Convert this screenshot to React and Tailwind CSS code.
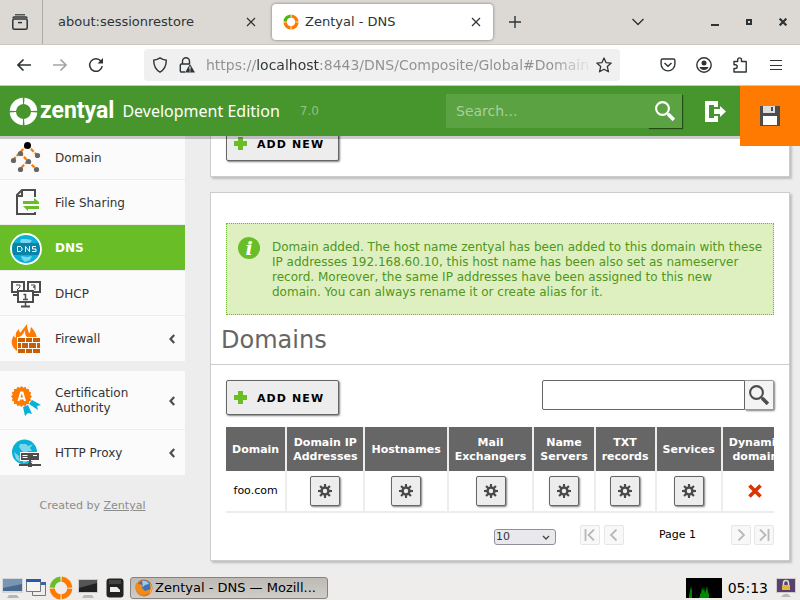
import React from "react";

function Cross({ className = "" }) {
  return (
    <svg viewBox="0 0 10 10" className={"size-2.5 " + className} fill="none" stroke="currentColor" strokeWidth="1.2">
      <path d="M1 1l8 8M9 1l-8 8" />
    </svg>
  );
}

function RingLogo({ className, arcs }) {
  return (
    <svg viewBox="0 0 30 30" className={className} fill="none" strokeWidth="6.5">
      <path d="M14.4 4a11 11 0 0 0-10.4 10.4" stroke={arcs[0]} />
      <path d="M15.8 4a11 11 0 0 1 10.2 10.4" stroke={arcs[1]} />
      <path d="M26 15.8a11 11 0 0 1-10.2 10.2" stroke={arcs[1]} />
      <path d="M14.4 26a11 11 0 0 1-10.4-10.2" stroke={arcs[1]} />
    </svg>
  );
}

function Magnifier({ className }) {
  return (
    <svg viewBox="0 0 20 20" className={className} fill="none" stroke="currentColor">
      <circle cx="7.5" cy="7.5" r="6.4" strokeWidth="2.1" />
      <path d="M12 12l2 2" strokeWidth="2" />
      <path d="M13.3 13.3l5.6 5.6" strokeWidth="3.6" />
    </svg>
  );
}

function Gear() {
  const teeth = [0, 45, 90, 135, 180, 225, 270, 315];
  return (
    <svg viewBox="0 0 14 14" className="size-3.5 text-[#4a4a4a]">
      <circle cx="7" cy="7" r="3.4" fill="none" stroke="currentColor" strokeWidth="2.4" />
      {teeth.map((a) => (
        <path key={a} d="M5.8 3.4L6 0h2l.2 3.4z" fill="currentColor" transform={`rotate(${a} 7 7)`} />
      ))}
    </svg>
  );
}

function TabBar() {
  return (
    <div className="flex h-[45px] shrink-0 items-center border-b border-[#cbc6be] bg-[#dcd9d4] text-[13px] text-[#2e3436]">
      <button aria-label="Recent browsing" className="flex h-full w-[43px] items-center justify-center border-r border-[#aeaaa5] pr-0.5">
        <svg viewBox="0 0 16 16" className="size-4" fill="none" stroke="currentColor" strokeWidth="1.5">
          <path d="M3 .8h10" strokeWidth="1.2" />
          <path d="M1 4.2c0-.8.5-1.2 1.3-1.2h11.4c.8 0 1.3.4 1.3 1.2" />
          <rect x=".8" y="5" width="14.4" height="10.2" rx="1.5" />
          <path d="M6 8.6h4" />
        </svg>
      </button>
      <div className="flex w-[227px] items-center pr-3.5 pl-[15px]">
        <span className="flex-1">about:sessionrestore</span>
        <button aria-label="Close tab"><Cross /></button>
      </div>
      <div className="ml-0.5 flex h-9 w-[221px] items-center rounded bg-white pr-3 pl-[11px] shadow-[0_0_3px_rgba(0,0,0,0.5)]">
        <RingLogo className="size-4" arcs={["#4eb516", "#ff7a00"]} />
        <span className="flex-1 pl-1.5">Zentyal - DNS</span>
        <button aria-label="Close tab"><Cross /></button>
      </div>
      <button aria-label="New tab" className="ml-4">
        <svg viewBox="0 0 12 12" className="size-3" stroke="currentColor" strokeWidth="1.4"><path d="M6 0v12M0 6h12" /></svg>
      </button>
      <div className="ml-auto flex items-center pr-3">
        <button aria-label="List all tabs" className="mr-[67px]">
          <svg viewBox="0 0 12 8" className="h-2 w-3" fill="none" stroke="currentColor" strokeWidth="1.4"><path d="M.5 1L6 6.500L11.500 1" /></svg>
        </button>
        <button aria-label="Minimize" className="mr-[27px]">
          <svg viewBox="0 0 8 8" className="size-2" fill="currentColor"><path d="M0 6h8v2H0z" /></svg>
        </button>
        <button aria-label="Maximize" className="mr-[27px]">
          <svg viewBox="0 0 6 6" className="size-1.5" fill="none" stroke="currentColor" strokeWidth="2"><path d="M1 1h4v4H1z" /></svg>
        </button>
        <button aria-label="Close window" className="mr-px">
          <svg viewBox="0 0 8 8" className="size-2" stroke="currentColor" strokeWidth="2.2"><path d="M.6.6l6.800 6.800M7.400.6L.6 7.400" /></svg>
        </button>
      </div>
    </div>
  );
}

function NavBar() {
  return (
    <div className="flex h-[41px] shrink-0 items-center border-b border-[#cbc6be] bg-white text-[#2e3436]">
      <button aria-label="Back" className="ml-[17px]">
        <svg viewBox="0 0 14 12" className="h-3 w-3.5" fill="none" stroke="currentColor" strokeWidth="1.600"><path d="M6.500.5L1 6l5.500 5.500M1 6h13" /></svg>
      </button>
      <button aria-label="Forward" className="ml-[22px] text-[#a5a5a5]">
        <svg viewBox="0 0 14 12" className="h-3 w-3.5" fill="none" stroke="currentColor" strokeWidth="1.600"><path d="M7.500.5L13 6l-5.500 5.500M13 6H0" /></svg>
      </button>
      <button aria-label="Reload" className="ml-[21px]">
        <svg viewBox="0 0 16 16" className="size-4" fill="none" stroke="currentColor" strokeWidth="1.500">
          <path d="M13 4.200A6.300 6.300 0 1 0 14.200 9" />
          <path d="M15 1v5.500H9.500z" fill="currentColor" stroke="none" />
        </svg>
      </button>
      <div className="ml-10 flex h-8 min-w-0 flex-1 items-center rounded bg-[#f0f0f0] px-2">
        <svg viewBox="0 0 16 16" className="size-4 shrink-0" fill="none" stroke="currentColor" strokeWidth="1.400">
          <path d="M8 .9c2 1.500 4 2 6.300 2.200 0 5.400-1.300 9.500-6.300 12-5-2.500-6.300-6.600-6.300-12C4 2.900 6 2.400 8 .9z" />
        </svg>
        <svg viewBox="0 0 16 16" className="ml-[11px] size-4 shrink-0" fill="none" stroke="currentColor" strokeWidth="1.400">
          <path d="M3.500 7V4.200a3.500 3.500 0 0 1 7 0V7M6 15H2.500c-.8 0-1.200-.4-1.200-1.200V8.200c0-.8.4-1.200 1.200-1.200h8.200" />
          <path d="M11 7l5 8.500H6z" fill="currentColor" stroke="none" />
          <path d="M11 9.500v3M11 13.400v1" stroke="#f0f0f0" strokeWidth="1.200" />
        </svg>
        <input
          aria-label="Address"
          readOnly
          defaultValue="https://localhost:8443/DNS/Composite/Global#Domains"
          className="ml-[11px] min-w-0 flex-1 bg-[linear-gradient(90deg,#8d8f90_50px,#2e3436_50px,#2e3436_113px,#8d8f90_113px,#8d8f90_345px,transparent_388px)] bg-clip-text text-sm text-transparent outline-none"
        />
        <button aria-label="Bookmark this page" className="ml-2">
          <svg viewBox="0 0 16 16" className="size-4" fill="none" stroke="currentColor" strokeWidth="1.300" strokeLinejoin="round">
            <path d="M8 1l2 4.600 5.200.5-3.900 3.500 1.200 5.200L8 12.200l-4.500 2.600 1.200-5.200L.8 6.100 6 5.600z" />
          </svg>
        </button>
      </div>
      <div className="ml-10 flex items-center gap-5 pr-4">
        <button aria-label="Save to Pocket">
          <svg viewBox="0 0 16 16" className="size-4" fill="none" stroke="currentColor" strokeWidth="1.400">
            <path d="M2.500 2h11c.9 0 1.400.5 1.400 1.400V7A6.900 6.900 0 0 1 1.100 7V3.400C1.100 2.500 1.600 2 2.500 2zM4.500 6L8 9.200 11.500 6" />
          </svg>
        </button>
        <button aria-label="Account">
          <svg viewBox="0 0 16 16" className="size-4">
            <circle cx="8" cy="8" r="7.200" fill="none" stroke="currentColor" strokeWidth="1.400" />
            <circle cx="8" cy="5.900" r="2.500" fill="currentColor" />
            <path d="M3.500 10h9c-.6 1.800-2.300 3-4.500 3s-3.900-1.200-4.500-3z" fill="currentColor" />
          </svg>
        </button>
        <button aria-label="Extensions">
          <svg viewBox="0 0 16 16" className="size-4" fill="none" stroke="currentColor" strokeWidth="1.400" strokeLinejoin="round">
            <path d="M2 15V11.500h1.300a1.900 1.900 0 0 0 0-3.800H2V4.500h3.700V2.800a1.900 1.900 0 0 1 3.800 0v1.700h4.700V15z" />
          </svg>
        </button>
        <button aria-label="Open application menu">
          <svg viewBox="0 0 16 12" className="h-3 w-4" stroke="currentColor"><path d="M2 1.500h12M2 6.500h12M2 10.500h12" /></svg>
        </button>
      </div>
    </div>
  );
}

function Header() {
  return (
    <header className="relative z-10 flex h-[50px] shrink-0 items-center bg-[#47962d] shadow-[0_3px_0_rgba(0,0,0,0.2)]">
      <RingLogo className="ml-[9px] size-[29px] shrink-0" arcs={["#fff", "#fff"]} />
      <span className="ml-0.5 font-[Roboto] text-[23px] font-bold text-white">zentyal</span>
      <span className="ml-2 font-['Noto_Sans'] text-base whitespace-nowrap text-white">Development Edition</span>
      <span className="ml-5 text-xs text-[#91c081]">7.0</span>
      <form className="ml-auto flex h-[34px] w-[236px] bg-[#5aa242]" onSubmit={(e) => e.preventDefault()}>
        <input aria-label="Search" placeholder="Search..." className="min-w-0 flex-1 px-2.5 font-['DejaVu_Sans'] text-sm text-white outline-none placeholder:text-[#a9d09b]" />
        <button aria-label="Search" className="flex w-[34px] items-center justify-center text-white shadow-[1px_1px_1px_rgba(0,0,0,0.5)]">
          <Magnifier className="size-5" />
        </button>
      </form>
      <button aria-label="Log out" className="ml-[23px]">
        <svg viewBox="0 0 21 21" className="size-[21px]" fill="#fff">
          <path d="M0 0h13v6H9V4H4v13h5v-2h4v6H0z" />
          <path d="M9 8h6V5l6 5.500-6 5.500v-3H9z" />
        </svg>
      </button>
      <button aria-label="Save changes" className="ml-3.5 flex h-[60px] w-[60px] items-center justify-center self-start bg-[#ff7a00]">
        <svg viewBox="0 0 20 20" className="size-5">
          <path d="M0 0h20v20H0z" fill="#4d4d4d" />
          <path d="M3 0h12v7H3z" fill="#dcdcdc" />
          <path d="M11 1h2v4h-2z" fill="#4d4d4d" />
          <path d="M3 10h14v9H3z" fill="#fff" />
        </svg>
      </button>
    </header>
  );
}

function DomainIcon() {
  return (
    <svg viewBox="0 0 32 32" className="size-8">
      <path d="M17 3L3 18M17 3l10 10M10 11l16 16M18 19l-8 8" stroke="#ff7a00" strokeWidth="2.200" strokeDasharray="4 1.500" />
      <circle cx="17.500" cy="3.500" r="3.500" />
      <g fill="#666"><circle cx="10.500" cy="11.500" r="2.600" /><circle cx="3.500" cy="18.500" r="2.600" /><circle cx="27.500" cy="13.500" r="2.600" /><circle cx="18.500" cy="19.500" r="2.600" /><circle cx="10.500" cy="27.500" r="2.600" /><circle cx="26.500" cy="27.500" r="2.600" /></g>
    </svg>
  );
}

function FileSharingIcon() {
  return (
    <svg viewBox="0 0 32 32" className="size-8" fill="none">
      <path d="M25 10V3H12L7 8v19h18v-2M7 9h5V3" stroke="#4d4d4d" strokeWidth="2" />
      <path d="M13 14h11v-3l5 4v2H13zM29 19H13l5 5v-2h11z" fill="#69be28" />
    </svg>
  );
}

function DnsIcon() {
  return (
    <svg viewBox="0 0 32 32" className="size-8">
      <circle cx="16" cy="16" r="15" fill="#0ab0d8" />
      <path d="M11 6h5l6 1-2 3-6 1-4-2zM11 23l6 1 5-1-2 4-5 2-3-3z" fill="#7cd6ee" />
      <path d="M2 10h28v12H2z" fill="#0784a8" />
      <circle cx="16" cy="16" r="15" fill="none" stroke="#fff" strokeWidth="1.800" />
      <path d="M7.500 13.500h3l1.500 1.500v2l-1.500 1.500h-3zM15.500 19v-5.500l4 5V13M26 13.500h-3.500v2.500H26v2.500h-4" fill="none" stroke="#fff" />
    </svg>
  );
}

function DhcpIcon() {
  return (
    <svg viewBox="0 0 32 32" className="size-8" fill="none" stroke="#4d4d4d">
      <path d="M2 4h12v10H2zM18 4h12v10H18z" strokeWidth="2" />
      <path d="M6 7h4v2l-3 3M21 7h4v2h-2 2v3" strokeWidth="1" />
      <path d="M3 17h5M24 17h5" strokeWidth="2" />
      <path d="M8 13h15v11H8z" fill="#fff" strokeWidth="2" />
      <path d="M13.500 16.500h2v5M13 21.500h5M15.500 25v3" strokeWidth="1.500" />
      <path d="M11 28.500h9" strokeWidth="2" />
    </svg>
  );
}

function FirewallIcon() {
  return (
    <svg viewBox="0 0 32 32" className="size-8">
      <path d="M7 28c-7-5-6-11-3-16 0 2 1 3 2 2-1-4 1-6 3-8 0 3 1 4 2 3 1-2 3-4 6-8 0 4 1 6 2 9 2 0 1-4 2-6 3 3 5 6 6 11z" fill="#ff7a00" />
      <path d="M9 14c3-1 5-4 6-7 0 3 0 5 2 7z" fill="#fbfbfb" />
      <path d="M7 14h24v17H7z" fill="#fbfbfb" />
      <path d="M8 15h7v4H8zM16 15h6v4h-6zM23 15h7v4h-7zM8 20h3v5H8zM12 20h6v5h-6zM19 20h7v5h-7zM27 20h3v5h-3zM8 26h7v4H8zM16 26h6v4h-6zM23 26h7v4h-7z" fill="#c95f00" />
    </svg>
  );
}

function CertificationIcon() {
  const points = Array.from({ length: 32 }, (_, i) => {
    const r = i % 2 ? 9 : 10.500;
    const a = (i * Math.PI) / 16;
    return `${11.500 + r * Math.cos(a)},${11.500 + r * Math.sin(a)}`;
  }).join(" ");
  return (
    <svg viewBox="0 0 32 32" className="size-8">
      <path d="M13 22l5-2 4 9-4-1-3 3zM19 19l3-4 9 5-4 1 1 4z" fill="#09b1d6" />
      <polygon points={points} fill="#ff7a00" />
      <path d="M8.500 16l2.500-8.500h1.500L15 16M9.500 13.500h4.500" fill="none" stroke="#fff" strokeWidth="2" />
    </svg>
  );
}

function ProxyIcon() {
  return (
    <svg viewBox="0 0 32 32" className="size-8">
      <circle cx="14.500" cy="15" r="12.500" fill="#09b1d6" />
      <path d="M10 7h6l2 2 5-2-3 4 2 3h-4l-1 3-5-3-3-4zM4 15l5 4 1 6-4-3zM13 19h4v6l-4 1z" fill="#7cd6ee" />
      <path d="M10 15h20v9H10z" fill="#fbfbfb" />
      <path d="M11 16h18v7H11zM19 23h2v4h-2zM9 27h22v2H9zM18 26h4v4h-4z" fill="#4d4d4d" />
      <path d="M12.500 18.500h5M12.500 20.500h5M23 18.500h4" stroke="#fff" />
    </svg>
  );
}

function MenuItem({ icon, label, active, arrow, last, tall }) {
  return (
    <a
      href="#"
      className={
        "flex items-center border-b px-2.5 pt-0.5 text-xs/[15px] " +
        (tall ? "h-[59px] " : active ? "h-[46px] " : "h-[45px] ") +
        (active ? "border-[#ededed] bg-[#69be28] font-bold text-white" : "bg-[#fbfbfb] text-[#333] " + (last ? "border-[#fbfbfb]" : "border-[#ededed]"))
      }
    >
      {icon}
      <span className="flex-1 pl-[13px]">{label}</span>
      {arrow && (
        <svg viewBox="0 0 6 10" className="h-2.5 w-1.5" fill="none" stroke="#4d4d4d" strokeWidth="2.200"><path d="M5.200 1L1.500 5l3.700 4" /></svg>
      )}
    </a>
  );
}

function Sidebar() {
  return (
    <aside className="w-[185px] shrink-0 pt-2.5">
      <nav>
        <MenuItem icon={<DomainIcon />} label="Domain" />
        <MenuItem icon={<FileSharingIcon />} label="File Sharing" />
        <MenuItem icon={<DnsIcon />} label="DNS" active />
        <MenuItem icon={<DhcpIcon />} label="DHCP" />
        <MenuItem icon={<FirewallIcon />} label="Firewall" arrow last />
        <div className="h-2.5" />
        <MenuItem icon={<CertificationIcon />} label={<>Certification<br />Authority</>} arrow tall />
        <MenuItem icon={<ProxyIcon />} label="HTTP Proxy" arrow last />
      </nav>
      <p className="pt-[23px] text-center text-[11px]/4 text-[#8c8c8c]">
        Created by <a href="#" className="underline">Zentyal</a>
      </p>
    </aside>
  );
}

function AddNew() {
  return (
    <button className="flex h-[35px] items-center gap-2.5 rounded-xs border border-[#666] bg-[#ededed] pr-3.5 pl-[7px] text-[11px] font-bold tracking-widest text-black shadow-[1px_1px_2px_rgba(0,0,0,0.5)]">
      <svg viewBox="0 0 13 13" className="size-[13px]" fill="#69be28"><path d="M4 0h5v4h4v5H9v4H4V9H0V4h4z" /></svg>
      <span className="pt-[3px]">ADD NEW</span>
    </button>
  );
}

const columns = [
  ["Domain"],
  ["Domain IP", "Addresses"],
  ["Hostnames"],
  ["Mail", "Exchangers"],
  ["Name", "Servers"],
  ["TXT", "records"],
  ["Services"],
  ["Dynamic", "domain"],
];

function DomainsTable() {
  return (
    <div className="mt-3 overflow-hidden">
      <table className="w-max min-w-full border-collapse text-center text-[11px]/[14px] text-black">
        <thead>
          <tr className="h-11">
            {columns.map((lines) => (
              <th key={lines[0]} className="border-r-2 border-[#ededed] bg-[#666] px-1.5 pt-0.5 text-white last:border-r-0">
                {lines[0]}
                {lines[1] && <><br />{lines[1]}</>}
              </th>
            ))}
          </tr>
        </thead>
        <tbody>
          <tr className="h-[41px] border-b-2 border-[#ededed]">
            <td className="border-r-2 border-[#ededed]">foo.com</td>
            {columns.slice(1, 7).map((lines) => (
              <td key={lines[0]} className="border-r-2 border-[#ededed]">
                <button aria-label={"Configure " + lines.join(" ")} className="inline-flex size-[30px] items-center justify-center rounded-xs border border-[#666] bg-[#ededed] align-middle shadow-[1px_1px_2px_rgba(0,0,0,0.5)]">
                  <Gear />
                </button>
              </td>
            ))}
            <td>
              <svg viewBox="0 0 14 14" className="mx-auto size-3.5" stroke="#dc3400" strokeWidth="3.600"><path d="M1.500 1.500l11 11M12.500 1.500l-11 11" /></svg>
            </td>
          </tr>
        </tbody>
      </table>
    </div>
  );
}

function PageButton({ label, d }) {
  return (
    <button aria-label={label} className="flex size-5 items-center justify-center rounded-xs border border-[#e6e6e6] bg-[#f8f8f8]">
      <svg viewBox="0 0 12 12" className="size-3" fill="none" stroke="#b8b8b8" strokeWidth="1.800"><path d={d} /></svg>
    </button>
  );
}

function Pager() {
  return (
    <div className="mt-3 flex items-center justify-end">
      <div className="relative mt-1 mr-6 flex">
        <select aria-label="Rows per page" className="h-4 w-[62px] appearance-none rounded-[3px] border border-[#8f8f9d] bg-[#e9e9ed] pl-px font-['DejaVu_Sans'] text-[11px]/[14px] text-[#333]">
          <option>10</option>
        </select>
        <svg viewBox="0 0 8 6" className="pointer-events-none absolute top-1.5 right-1.5 h-1.5 w-2" fill="none" stroke="#444" strokeWidth="1.300"><path d="M1 1l3 3 3-3" /></svg>
      </div>
      <PageButton label="First page" d="M1.500 0v12M10 .5L4.500 6l5.500 5.500" />
      <div className="w-1" />
      <PageButton label="Previous page" d="M8.500.5L3 6l5.500 5.500" />
      <span className="w-[107px] text-center text-[11px]/5 text-black">Page 1</span>
      <PageButton label="Next page" d="M3.500.5L9 6l-5.500 5.500" />
      <div className="w-[3px]" />
      <PageButton label="Last page" d="M2 .5L7.500 6 2 11.500M10.500 0v12" />
    </div>
  );
}

function DomainsPanel() {
  return (
    <section className="mt-[15px] border border-[#ccc] bg-white pt-[30px] pb-[15px] shadow-[2px_2px_2px_rgba(0,0,0,0.2)]">
      <div className="mx-[15px] flex border border-dotted border-[#72b336] bg-[#dff0c0] pt-4 pr-[9px] pb-3.5 pl-[11px] text-xs/[15px] text-[#4f961b]">
        <svg viewBox="0 0 22 22" className="-mt-[3px] mr-3 size-[22px] shrink-0">
          <circle cx="11" cy="11" r="11" fill="#69be28" />
          <text x="11" y="18" textAnchor="middle" fontFamily="DejaVu Serif" fontSize="19" fontStyle="italic" fontWeight="bold" fill="#fff">i</text>
        </svg>
        <p>
          Domain added. The host name zentyal has been added to this domain with these IP addresses 192.168.60.10, this host name has been also set as nameserver record. Moreover, the same IP addresses have been assigned to this new domain. You can always rename it or create alias for it.
        </p>
      </div>
      <h2 className="border-b border-[#ccc] px-2.5 pt-0.5 text-2xl/[47px] text-[#666]">Domains</h2>
      <div className="px-[15px] pt-[15px]">
        <div className="flex items-start justify-between">
          <AddNew />
          <form className="flex h-[30px] w-[232px]" onSubmit={(e) => e.preventDefault()}>
            <input aria-label="Search domains" className="min-w-0 flex-1 rounded-l-xs border border-[#666] bg-white px-2 text-xs" />
            <button aria-label="Search" className="flex w-[29px] items-center justify-center rounded-r-xs border border-l-0 border-[#999] bg-[#f4f4f4] text-[#4d4d4d] shadow-[1px_1px_2px_rgba(0,0,0,0.5)]">
              <Magnifier className="size-5" />
            </button>
          </form>
        </div>
        <DomainsTable />
        <Pager />
      </div>
    </section>
  );
}

function Taskbar() {
  return (
    <footer className="flex h-6 shrink-0 items-center bg-[#eeedeb] text-[13px] text-black">
      <button aria-label="Show desktop" className="ml-0.5">
        <svg viewBox="0 0 22 22" className="size-[22px]">
          <path d="M0 1h21v15H0z" fill="#d3d7db" /><path d="M1 2h19v12H1z" fill="#48688c" /><path d="M1 2h19v5L1 11z" fill="#7895b3" /><path d="M7 18h8l2 3H5z" fill="#b5b5b5" />
        </svg>
      </button>
      <button aria-label="Windows" className="ml-0.5">
        <svg viewBox="0 0 20 20" className="size-5">
          <path d="M6.500 4.500h13v13h-13z" fill="#eee" stroke="#777" /><path d="M6 4h14v3H6z" fill="#3465a4" /><path d="M.5 1.500h14v12H.5z" fill="#f3f3f3" stroke="#777" /><path d="M0 1h15v3H0z" fill="#2859a5" />
        </svg>
      </button>
      <button aria-label="Zentyal" className="ml-[3px]">
        <RingLogo className="size-6" arcs={["#69be28", "#ff7a00"]} />
      </button>
      <button aria-label="Terminal" className="ml-[5px]">
        <svg viewBox="0 0 20 20" className="size-5"><path d="M0 1h20v14H0z" fill="#ccc" /><path d="M1 2h18v12H1z" fill="#222" /><path d="M1 2h18v3L1 10z" fill="#555" /><path d="M6 17h8l2 3H4z" fill="#bbb" /></svg>
      </button>
      <button aria-label="Disk" className="ml-2">
        <svg viewBox="0 0 18 20" className="h-5 w-[18px]"><rect x=".5" y=".5" width="17" height="19" rx="3" fill="#222" /><path d="M3 2h12v4H3z" fill="#444" /><path d="M4 9h7l3 3v2H4z" fill="#eee" /></svg>
      </button>
      <button className="ml-1.5 flex h-[22px] w-[198px] items-center rounded-[3px] border border-[#858380] bg-linear-to-b from-[#bdbab6] to-[#d0cdc9] pl-1 whitespace-nowrap">
        <svg viewBox="0 0 18 18" className="mr-0.5 size-[18px]">
          <circle cx="9" cy="9" r="8.500" fill="#e66b12" /><circle cx="9.500" cy="7.500" r="6.200" fill="#3c72b8" /><path d="M7 2c3-1 6 0 7 3l-4 1-2 2z" fill="#9bc8ec" /><path d="M1 4l3 1 4 1-1 3 3 3 6-2c-2 6-8 8-12 5S0 8 1 4z" fill="#f08a1c" /><path d="M15 4c3 4 2 9-1 11l2-5z" fill="#ffd052" />
        </svg>
        Zentyal - DNS — Mozill...
      </button>
      <svg viewBox="0 0 36 20" className="ml-auto h-5 w-9"><path d="M0 0h36v20H0z" /><path d="M3 20v-2l1-5 1-5 1 5v7zM13 20l1-2v-3l1 1 1-7 1 4 1-4 1 6 1-3 1-4 1 6 1 2v5z" fill="#008a00" /></svg>
      <time className="ml-1.5 text-sm">05:13</time>
      <svg viewBox="0 0 20 20" className="mr-1 ml-2 size-5"><path d="M0 0h20v15H0z" fill="#ccc" /><path d="M1 1h18v13H1z" fill="#58406f" /><path d="M7.500 7V5a2.500 2.500 0 0 1 5 0v2" fill="none" stroke="#ddd" strokeWidth="1.500" /><path d="M6 7h8v5H6z" fill="#e5b535" /><path d="M8 16h4l3 3H5z" fill="#bbb" /></svg>
    </footer>
  );
}

export default function App() {
  return (
    <div className="flex h-screen flex-col overflow-hidden bg-[#ededed] font-['DejaVu_Sans',sans-serif]">
      <TabBar />
      <NavBar />
      <Header />
      <div className="-mt-[11px] flex min-h-0 flex-1 overflow-hidden">
        <Sidebar />
        <main className="min-w-0 flex-1 pr-2.5 pl-[25px]">
          <section className="border border-t-0 border-[#ccc] bg-white px-[15px] pt-px pb-[15px] shadow-[2px_2px_2px_rgba(0,0,0,0.2)]">
            <AddNew />
          </section>
          <DomainsPanel />
        </main>
      </div>
      <Taskbar />
    </div>
  );
}
